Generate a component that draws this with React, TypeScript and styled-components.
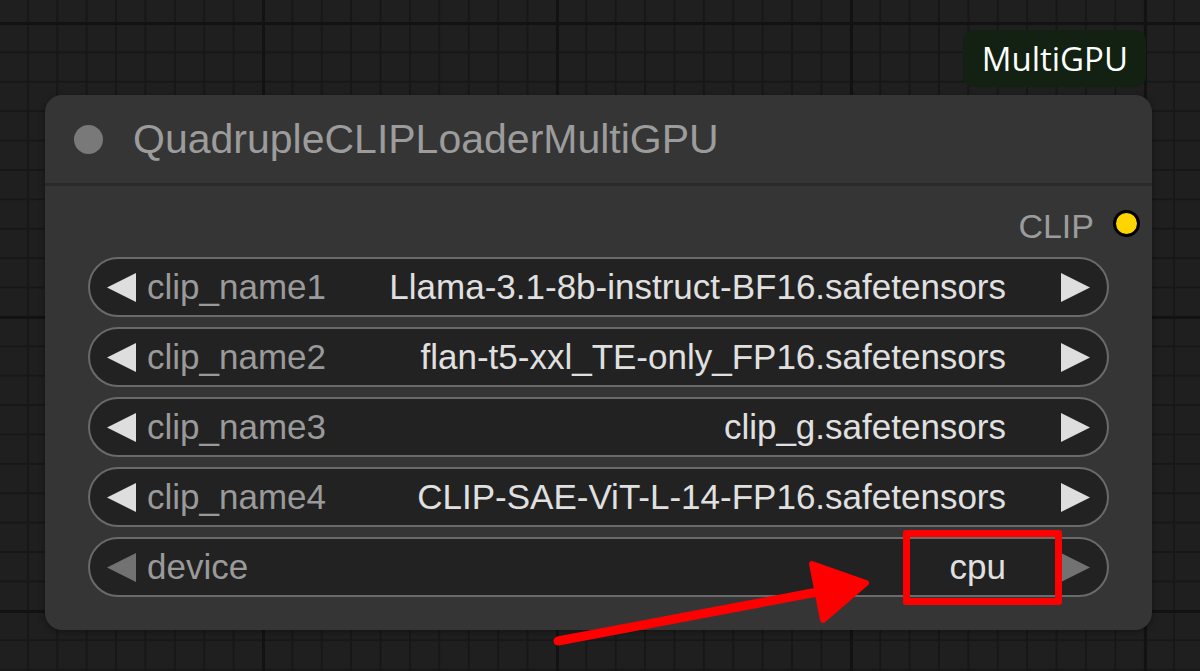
import React from 'react';
import styled, { createGlobalStyle } from 'styled-components';

const GlobalStyle = createGlobalStyle`
    html, body {
        margin: 0;
        padding: 0;
        background-color: #1f1f1f;
    }
    * {
        box-sizing: border-box;
    }
`

const Canvas = styled.div`
    position: relative;
    width: 1200px;
    height: 671px;
    overflow: hidden;
    background-color: #1f1f1f;
    background-image:
        linear-gradient(to right, #121212 3px, transparent 3px),
        linear-gradient(to bottom, #121212 3px, transparent 3px),
        linear-gradient(to right, #171717 2px, transparent 2px),
        linear-gradient(to bottom, #171717 2px, transparent 2px);
    background-size: 294px 100%, 100% 294px, 29.4px 100%, 100% 29.4px;
    background-position: 262px 0, 0 22px, 262px 0, 0 22px;
    font-family: "Liberation Sans", Arial, sans-serif;
`
const Stage = styled.div`
    display: flex;
    flex-direction: column;
    padding: 30px 0 0 45px;
    width: 1152px;
`
const Badge = styled.div`
    align-self: flex-end;
    margin-right: 6px;
    height: 57px;
    padding: 0 18px 0 19px;
    display: flex;
    align-items: center;
    background: #122112;
    border-radius: 11px;
    color: #ffffff;
    font-family: "Open Sans", "Noto Sans", sans-serif;
    font-size: 33px;
`
const Node = styled.div`
    margin-top: 8px;
    background: #353535;
    border-radius: 17px;
    box-shadow: 0 2px 6px rgba(0, 0, 0, 0.35);
`
const Header = styled.div`
    height: 91px;
    display: flex;
    align-items: center;
    padding-left: 29px;
    border-bottom: 3px solid #2a2a2a;
`
const StatusDot = styled.div`
    width: 29px;
    height: 29px;
    border-radius: 50%;
    background: #797979;
    margin-right: 30px;
`
const Title = styled.h1`
    margin: 0;
    font-weight: 400;
    font-size: 41px;
    color: #9c9c9c;
`
const Body = styled.div`
    padding: 20px 43px 33px 43px;
    display: flex;
    flex-direction: column;
    gap: 10px;
`
const OutputRow = styled.div`
    height: 40px;
    margin-right: -31px;
    margin-bottom: 1px;
    display: flex;
    align-items: center;
    justify-content: flex-end;
    gap: 19px;
`
const OutputName = styled.span`
    font-size: 34px;
    color: #9c9c9c;
`
const Socket = styled.div`
    width: 27px;
    height: 27px;
    border-radius: 50%;
    background: #ffd500;
    border: 3px solid #000;
    margin-top: -6px;
`
const Widget = styled.div`
    height: 60px;
    display: flex;
    align-items: center;
    padding: 0 17px;
    background: #222222;
    border: 2.5px solid #6a6a6a;
    border-radius: 30px;
    font-size: 35px;
`
const Label = styled.span`
    margin-left: 11px;
    color: #9a9a9a;
`
const Value = styled.span`
    margin-left: auto;
    margin-right: 55px;
    color: #e0e0e0;
`
const Arrow = styled.svg<{ $dim?: boolean }>`
    width: 29px;
    height: 29px;
    flex-shrink: 0;
    fill: ${p => p.$dim ? '#727272' : '#dedede'};
`
const Overlay = styled.svg`
    position: absolute;
    top: 0;
    left: 0;
    pointer-events: none;
`
const Highlight = styled.div`
    position: absolute;
    left: 903px;
    top: 530px;
    width: 159px;
    height: 75px;
    border: 7px solid #ff0000;
    border-radius: 3px;
`

type ComboProps = {
    label: string,
    value: string,
    dim?: boolean,
}
const Combo: React.FC<ComboProps> = (props) => {
    return (
        <Widget>
            <Arrow viewBox="0 0 29 29" $dim={props.dim}><polygon points="0,14.5 29,0 29,29" /></Arrow>
            <Label>{props.label}</Label>
            <Value>{props.value}</Value>
            <Arrow viewBox="0 0 29 29" $dim={props.dim}><polygon points="0,0 29,14.5 0,29" /></Arrow>
        </Widget>
    );
};

const widgets = [
    { label: 'clip_name1', value: 'Llama-3.1-8b-instruct-BF16.safetensors' },
    { label: 'clip_name2', value: 'flan-t5-xxl_TE-only_FP16.safetensors' },
    { label: 'clip_name3', value: 'clip_g.safetensors' },
    { label: 'clip_name4', value: 'CLIP-SAE-ViT-L-14-FP16.safetensors' },
]

const App: React.FC = () => {
    return (
        <Canvas>
            <GlobalStyle />
            <Stage>
                <Badge>MultiGPU</Badge>
                <Node>
                    <Header>
                        <StatusDot />
                        <Title>QuadrupleCLIPLoaderMultiGPU</Title>
                    </Header>
                    <Body>
                        <OutputRow>
                            <OutputName>CLIP</OutputName>
                            <Socket />
                        </OutputRow>
                        {widgets.map(w => <Combo key={w.label} label={w.label} value={w.value} />)}
                        <Combo label="device" value="cpu" dim />
                    </Body>
                </Node>
            </Stage>
            <Highlight />
            <Overlay width="1200" height="671" viewBox="0 0 1200 671">
                <line x1="558" y1="641" x2="828" y2="590" stroke="#ff0000" strokeWidth="9" strokeLinecap="round" />
                <polygon points="866,583 812,564 823,620" fill="#ff0000" stroke="#ff0000" strokeWidth="6" strokeLinejoin="round" />
            </Overlay>
        </Canvas>
    );
};

export default App;
